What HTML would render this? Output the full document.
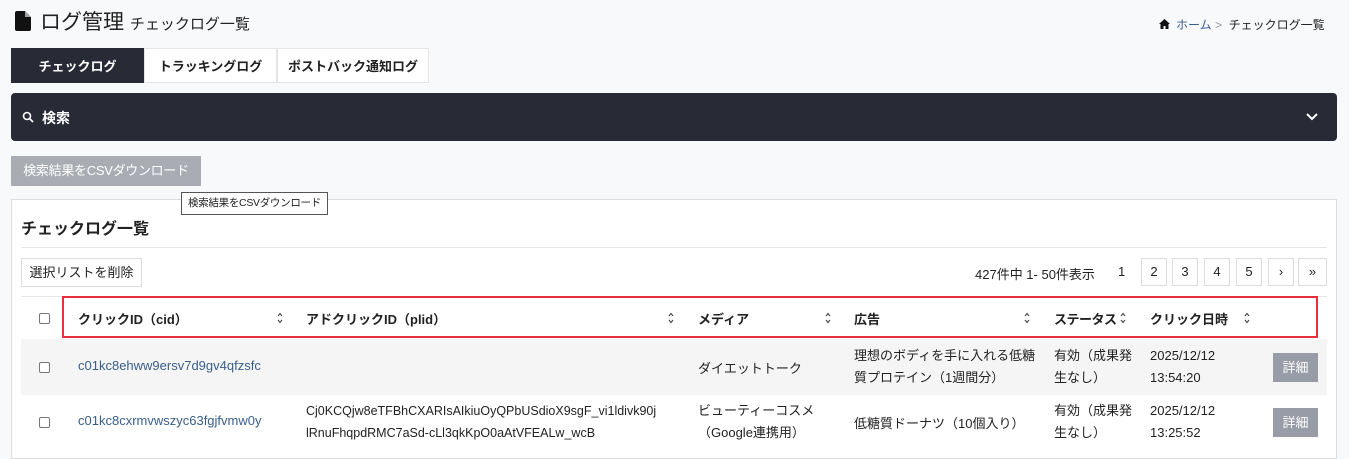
<!DOCTYPE html>
<html><head><meta charset="utf-8"><style>
*{box-sizing:border-box;margin:0;padding:0}
body{width:1349px;height:446px;overflow:hidden;background:#f8f9fa;font-family:"Liberation Sans","Noto Sans CJK JP",sans-serif;color:#222;font-size:13px;position:relative}
.a{position:absolute;white-space:nowrap}
.tab{position:absolute;top:48px;height:35px;line-height:35px;text-align:center;font-weight:bold;font-size:13px;background:#fff;border:1px solid #e5e5e5}
.pb{position:absolute;top:258px;width:26px;height:28px;border:1px solid #ddd;background:#fff;text-align:center;line-height:26px;font-size:13px}
.th{position:absolute;top:309px;font-weight:bold;font-size:13px}
.sort{position:absolute;top:312px}
.cb{position:absolute;width:11px;height:11px;border:1px solid #777;border-radius:2px;background:#fff}
.lk{color:#3a5f8a}
.btn{position:absolute;left:1273px;width:45px;height:29px;background:#979ca6;color:#fff;text-align:center;line-height:29px;font-size:13px}
</style></head><body>
<svg width="0" height="0" style="position:absolute"><defs><symbol id="s" viewBox="0 0 6 12"><path d="M1 4l2-2.5 2 2.5M1 8l2 2.5 2-2.5" stroke="#444" stroke-width="1.1" fill="none"/></symbol></defs></svg>
<svg class="a" style="left:15px;top:11px" width="16" height="20" viewBox="0 0 16 20"><path d="M2 0h8l6 6v12a2 2 0 0 1-2 2H2a2 2 0 0 1-2-2V2a2 2 0 0 1 2-2z" fill="#111"/><path d="M10 0v6h6" fill="#fff" opacity=".6"/></svg>
<div class="a" style="left:40px;top:6px;font-size:21px">ログ管理 <span style="font-size:15px">チェックログ一覧</span></div>
<svg class="a" style="left:1159px;top:19px" width="11" height="10" viewBox="0 0 11 10"><path d="M5.5 0L0 5h1.5v5h3V7h2v3h3V5H11z" fill="#111"/></svg>
<div class="a" style="left:1176px;top:16px;font-size:12px"><span class="lk">ホーム</span> <span style="color:#999">&gt;</span>&nbsp; チェックログ一覧</div>
<div class="tab" style="left:11px;width:133px;background:#282a36;color:#fff;border-color:#282a36">チェックログ</div>
<div class="tab" style="left:144px;width:133px">トラッキングログ</div>
<div class="tab" style="left:277px;width:152px">ポストバック通知ログ</div>
<div class="a" style="left:11px;top:93px;width:1326px;height:48px;background:#282a36;border-radius:4px"></div>
<svg class="a" style="left:22px;top:111px" width="12" height="12" viewBox="0 0 12 12"><circle cx="5" cy="5" r="3.5" stroke="#fff" stroke-width="1.6" fill="none"/><path d="M7.5 7.5L11 11" stroke="#fff" stroke-width="1.8"/></svg>
<div class="a" style="left:42px;top:108px;color:#fff;font-weight:bold;font-size:14px">検索</div>
<svg class="a" style="left:1306px;top:113px" width="12" height="8" viewBox="0 0 12 8"><path d="M1 1l5 5 5-5" stroke="#fff" stroke-width="2" fill="none"/></svg>
<div class="a" style="left:11px;top:156px;width:190px;height:30px;background:#a9adb3;color:#fff;line-height:30px;text-align:center;font-size:13px;letter-spacing:-0.3px">検索結果をCSVダウンロード</div>
<div class="a" style="left:11px;top:199px;width:1326px;height:260px;background:#fff;border:1px solid #ddd"></div>
<div class="a" style="left:181px;top:192px;width:147px;height:23px;border:1px solid #555;background:#fff;font-size:10.5px;line-height:21px;text-align:center;letter-spacing:-0.3px">検索結果をCSVダウンロード</div>
<div class="a" style="left:21px;top:215px;font-size:16px;font-weight:bold">チェックログ一覧</div>
<div class="a" style="left:21px;top:247px;width:1306px;height:1px;background:#e5e5e5"></div>
<div class="a" style="left:21px;top:258px;width:121px;height:29px;border:1px solid #ddd;background:#fff;line-height:27px;text-align:center">選択リストを削除</div>
<div class="a" style="left:975px;top:264px">427件中 1- 50件表示</div>
<div class="a" style="left:1118px;top:264px">1</div>
<div class="pb" style="left:1141px">2</div><div class="pb" style="left:1172px">3</div><div class="pb" style="left:1204px">4</div><div class="pb" style="left:1236px">5</div><div class="pb" style="left:1268px">›</div><div class="pb" style="left:1298px;width:29px">»</div>
<div class="a" style="left:21px;top:296px;width:1306px;height:1px;background:#e5e5e5"></div>
<div class="a" style="left:62px;top:296px;width:1256px;height:42px;border:2px solid #e8303a"></div>
<div class="cb" style="left:39px;top:313px"></div>
<div class="th" style="left:78px">クリックID（cid）</div><svg class="sort" style="left:277px" width="6" height="12"><use href="#s"/></svg>
<div class="th" style="left:306px">アドクリックID（plid）</div><svg class="sort" style="left:668px" width="6" height="12"><use href="#s"/></svg>
<div class="th" style="left:698px">メディア</div><svg class="sort" style="left:825px" width="6" height="12"><use href="#s"/></svg>
<div class="th" style="left:854px">広告</div><svg class="sort" style="left:1024px" width="6" height="12"><use href="#s"/></svg>
<div class="th" style="left:1054px;letter-spacing:-0.5px">ステータス</div><svg class="sort" style="left:1120px" width="6" height="12"><use href="#s"/></svg>
<div class="th" style="left:1150px">クリック日時</div><svg class="sort" style="left:1244px" width="6" height="12"><use href="#s"/></svg>
<div class="a" style="left:21px;top:339px;width:1306px;height:56px;background:#f5f5f5"></div>
<div class="cb" style="left:39px;top:362px"></div>
<div class="a lk" style="left:78px;top:358px">c01kc8ehww9ersv7d9gv4qfzsfc</div>
<div class="a" style="left:698px;top:358px">ダイエットトーク</div>
<div class="a" style="left:854px;top:345px;line-height:22px">理想のボディを手に入れる低糖<br>質プロテイン（1週間分）</div>
<div class="a" style="left:1054px;top:345px;line-height:22px">有効（成果発<br>生なし）</div>
<div class="a" style="left:1150px;top:345px;line-height:22px">2025/12/12<br>13:54:20</div>
<div class="btn" style="top:353px">詳細</div>
<div class="cb" style="left:39px;top:417px"></div>
<div class="a lk" style="left:78px;top:413px">c01kc8cxrmvwszyc63fgjfvmw0y</div>
<div class="a" style="left:306px;top:400px;line-height:22px;font-size:12.5px">Cj0KCQjw8eTFBhCXARIsAIkiuOyQPbUSdioX9sgF_vi1ldivk90j<br>lRnuFhqpdRMC7aSd-cLl3qkKpO0aAtVFEALw_wcB</div>
<div class="a" style="left:698px;top:400px;line-height:22px">ビューティーコスメ<br>（Google連携用）</div>
<div class="a" style="left:854px;top:413px">低糖質ドーナツ（10個入り）</div>
<div class="a" style="left:1054px;top:400px;line-height:22px">有効（成果発<br>生なし）</div>
<div class="a" style="left:1150px;top:400px;line-height:22px">2025/12/12<br>13:25:52</div>
<div class="btn" style="top:408px">詳細</div>
</body></html>
